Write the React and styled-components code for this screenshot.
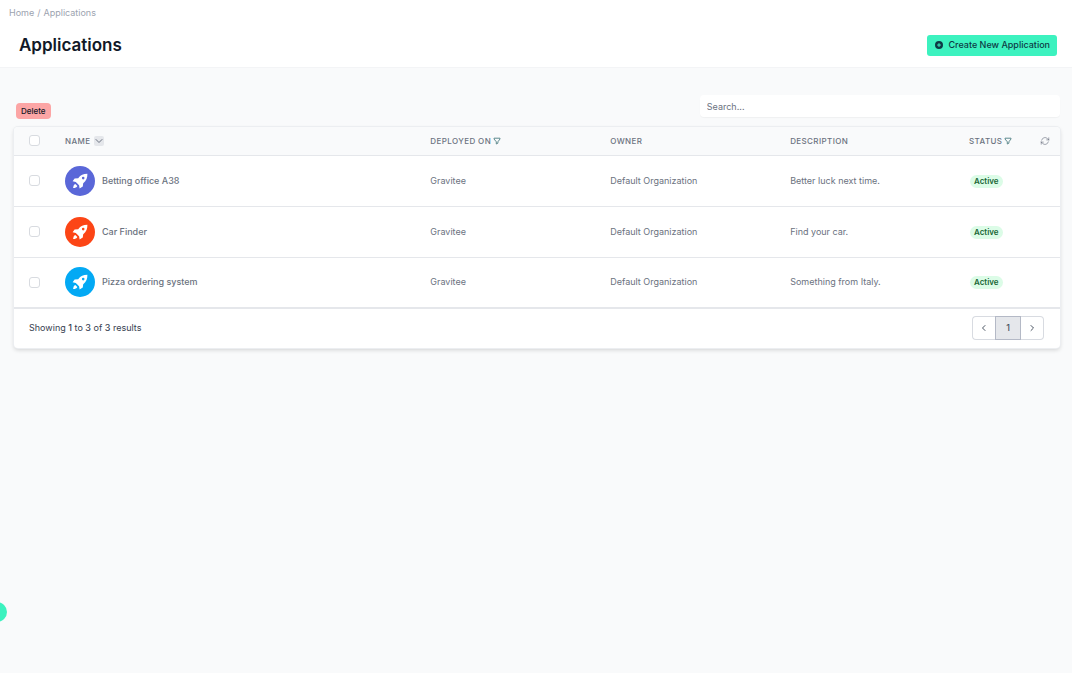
import React, { useState } from "react";
import styled, { createGlobalStyle } from "styled-components";
import { HiPlusCircle } from "react-icons/hi";
import { HiOutlineArrowPath } from "react-icons/hi2";

const GlobalStyle = createGlobalStyle`
  * {
    box-sizing: border-box;
  }
  body {
    margin: 0;
    background: #f9fafb;
    color: #111827;
    font-family: Inter, "Liberation Sans", sans-serif;
    font-size: 9px;
    line-height: 14px;
  }
  button, input {
    font-family: inherit;
    font-size: inherit;
    line-height: inherit;
  }
`;

const Page = styled.div`
  position: relative;
  min-height: 100vh;
`;

const Header = styled.header`
  background: #fff;
  border-bottom: 1px solid #f3f4f6;
  padding: 6px 15px 10px 9px;
`;

const Breadcrumb = styled.nav`
  display: flex;
  gap: 3px;
  color: #9ca3af;

  a {
    color: inherit;
    text-decoration: none;
  }
`;

const TitleRow = styled.div`
  display: flex;
  align-items: center;
  justify-content: space-between;
  margin-top: 13px;
  padding-left: 10px;
`;

const Title = styled.h1`
  margin: 0;
  font-size: 17px;
  font-weight: 600;
  line-height: 24px;
`;

const CreateButton = styled.button`
  display: flex;
  align-items: center;
  gap: 5px;
  height: 21px;
  padding: 0 7px;
  border: 0;
  border-radius: 3px;
  background: #3cf2bf;
  color: #0e3a45;
  font-weight: 500;
  cursor: pointer;
`;

const Main = styled.main`
  padding: 27px 12px 0 14px;
`;

const Tools = styled.div`
  display: flex;
  justify-content: space-between;
  align-items: flex-end;
  height: 24px;
  margin-bottom: 8px;
  padding-left: 2px;
`;

const DeleteButton = styled.button`
  height: 16px;
  padding: 0 5px;
  border: 0;
  border-radius: 4px;
  background: #fca5a5;
  color: #111827;
  font-size: 8px;
  font-weight: 500;
  cursor: pointer;
`;

const Search = styled.input`
  align-self: flex-start;
  width: 34.5%;
  height: 22px;
  padding: 0 7px;
  border: 0;
  border-radius: 4px;
  background: #fff;
  box-shadow: 0 1px 1px rgba(0, 0, 0, 0.04);
  color: #374151;

  &::placeholder {
    color: #6b7280;
    opacity: 1;
  }
`;

const Card = styled.section`
  overflow: hidden;
  background: #fff;
  border-radius: 4px;
  box-shadow: 0 0 0 1px #eceef1, 0 2px 4px rgba(0, 0, 0, 0.16);
`;

const Table = styled.table`
  width: 100%;
  table-layout: fixed;
  border-collapse: collapse;
  color: #6b7280;
`;

const Col = styled.col`
  width: ${props => props.$width};
`;

const HeadCell = styled.th`
  height: 28px;
  padding: 0;
  background: #f9fafb;
  border-bottom: 1px solid #e5e7eb;
  font-size: 8px;
  font-weight: 500;
  letter-spacing: 0.05em;
  text-align: left;
  text-transform: uppercase;
`;

const HeadLabel = styled.span`
  display: flex;
  align-items: center;
  gap: ${props => props.$gap || "1px"};
`;

const Cell = styled.td`
  height: 51px;
  padding: 0;
  border-bottom: 1px solid #e5e7eb;

  tr:last-child > & {
    height: 50px;
  }
`;

const CheckCell = styled(Cell)`
  padding-left: 15px;
`;

const CheckHead = styled(HeadCell)`
  padding-left: 15px;
`;

const Checkbox = styled.input`
  display: block;
  appearance: none;
  width: 11px;
  height: 11px;
  margin: 0;
  border: 1px solid #d8dbe0;
  border-radius: 3px;
  background: #fff;

  &:checked {
    background: #3cf2bf;
  }
`;

const IconButton = styled.button`
  display: flex;
  align-items: center;
  justify-content: center;
  width: 10px;
  height: 10px;
  padding: 0;
  border: 0;
  border-radius: 2px;
  background: ${props => props.$background || "transparent"};
  color: #6b7280;
  cursor: pointer;
`;

const AppName = styled.div`
  display: flex;
  align-items: center;
  gap: 7px;
  font-weight: 500;
`;

const Avatar = styled.span`
  display: flex;
  align-items: center;
  justify-content: center;
  width: 30px;
  height: 30px;
  border-radius: 50%;
  background: ${props => props.$color};
  color: #fff;
`;

const Badge = styled.span`
  display: inline-block;
  margin-left: 1px;
  padding: 0 4px;
  border-radius: 7px;
  background: #dcfce7;
  color: #166534;
  font-size: 8px;
  font-weight: 600;
  line-height: 13px;
`;

const Footer = styled.footer`
  display: flex;
  align-items: center;
  justify-content: space-between;
  height: 40px;
  padding: 0 16px 0 15px;
  border-top: 1px solid #e5e7eb;
  color: #374151;

  p {
    margin: 0;
  }
  b {
    font-weight: 500;
  }
`;

const Pagination = styled.nav`
  display: flex;
`;

const PageButton = styled.button`
  display: flex;
  align-items: center;
  justify-content: center;
  width: ${props => props.$active ? "26px" : "23px"};
  height: 24px;
  padding: 0;
  border: 1px solid ${props => props.$active ? "#b4b9c6" : "#d8dbe1"};
  border-width: ${props => props.$active ? "1px" : "1px 0"};
  background: ${props => props.$active ? "#e5e7eb" : "#fff"};
  color: #4b5563;
  font-weight: 500;
  cursor: pointer;

  &:first-child {
    border-left-width: 1px;
    border-radius: 4px 0 0 4px;
  }
  &:last-child {
    border-right-width: 1px;
    border-radius: 0 4px 4px 0;
  }
`;

// round handle of the collapsed side menu
const MenuHandle = styled.button`
  position: absolute;
  top: 602px;
  left: -13px;
  width: 20px;
  height: 20px;
  padding: 0;
  border: 0;
  border-radius: 50%;
  background: #3cf2bf;
  cursor: pointer;
`;

const applications = [
    { id: 1, name: "Betting office A38", color: "#5a67d8", deployedOn: "Gravitee", owner: "Default Organization", description: "Better luck next time." },
    { id: 2, name: "Car Finder", color: "#fc4516", deployedOn: "Gravitee", owner: "Default Organization", description: "Find your car." },
    { id: 3, name: "Pizza ordering system", color: "#03a9f4", deployedOn: "Gravitee", owner: "Default Organization", description: "Something from Italy." },
];

function RocketIcon() {
    return (
        <svg width="16" height="16" viewBox="0 0 16 16" fill="currentColor">
            <path
                fillRule="evenodd"
                d="M15.4.8C15.5 4.8 14.4 7.6 11.2 10.2l-.4 3.2-3.2 2-.5-3.2-3.3-3.3L.6 8.3l2-2.9 3.6-.2C8.600 2 11.400.8 15.4.8zM11.200 3.800a1.300 1.300 0 1 0 0 2.600 1.300 1.300 0 0 0 0-2.600z"
            />
            <path d="M3.300 10.900c-1.500.6-2 2-2.200 4.200 2.200-.2 3.700-.7 4.200-2.200z" />
        </svg>
    )
}

function FilterIcon() {
    return (
        <svg width="8" height="8" viewBox="0 0 8 8" fill="none" stroke="#5f8a8e" strokeLinejoin="round">
            <path d="M1 1.2h6v.8L4.900 4.800v1.400L3.300 7V4.800L1 2z" />
        </svg>
    )
}

function Chevron({ d }) {
    return (
        <svg width="8" height="8" viewBox="0 0 8 8" fill="none" stroke="currentColor" strokeLinecap="round" strokeLinejoin="round">
            <path d={d} />
        </svg>
    )
}

function ApplicationRow({ app, checked, onToggle }) {
    return (
        <tr>
            <CheckCell>
                <Checkbox type="checkbox" aria-label={app.name} checked={checked} onChange={onToggle} />
            </CheckCell>
            <Cell>
                <AppName>
                    <Avatar $color={app.color}><RocketIcon /></Avatar>
                    {app.name}
                </AppName>
            </Cell>
            <Cell>{app.deployedOn}</Cell>
            <Cell>{app.owner}</Cell>
            <Cell>{app.description}</Cell>
            <Cell><Badge>Active</Badge></Cell>
            <Cell />
        </tr>
    )
}

export default function App() {
    const [selected, setSelected] = useState([]);
    const [search, setSearch] = useState("");

    const allSelected = selected.length === applications.length;

    const toggle = (id) => {
        setSelected(selected.includes(id) ? selected.filter(item => item !== id) : [...selected, id]);
    };

    return (
        <Page>
            <GlobalStyle />
            <Header>
                <Breadcrumb aria-label="Breadcrumb">
                    <a href="#home">Home</a>
                    <span>/</span>
                    <a href="#applications">Applications</a>
                </Breadcrumb>
                <TitleRow>
                    <Title>Applications</Title>
                    <CreateButton type="button">
                        <HiPlusCircle size={10} />
                        Create New Application
                    </CreateButton>
                </TitleRow>
            </Header>

            <Main>
                <Tools>
                    <DeleteButton type="button">Delete</DeleteButton>
                    <Search
                        type="text"
                        aria-label="Search"
                        placeholder="Search..."
                        value={search}
                        onChange={(e) => setSearch(e.target.value)}
                    />
                </Tools>

                <Card>
                    <Table>
                        <colgroup>
                            <Col $width="51px" />
                            <Col />
                            <Col $width="17.2%" />
                            <Col $width="17.2%" />
                            <Col $width="17.1%" />
                            <Col $width="71px" />
                            <Col $width="20px" />
                        </colgroup>
                        <thead>
                            <tr>
                                <CheckHead>
                                    <Checkbox
                                        type="checkbox"
                                        aria-label="Select all"
                                        checked={allSelected}
                                        onChange={() => setSelected(allSelected ? [] : applications.map(app => app.id))}
                                    />
                                </CheckHead>
                                <HeadCell>
                                    <HeadLabel $gap="4px">
                                        Name
                                        <IconButton type="button" aria-label="Sort by name" $background="#e5e7eb">
                                            <Chevron d="M1 2.5l3 3 3-3" />
                                        </IconButton>
                                    </HeadLabel>
                                </HeadCell>
                                <HeadCell>
                                    <HeadLabel>
                                        Deployed on
                                        <IconButton type="button" aria-label="Filter by deployment"><FilterIcon /></IconButton>
                                    </HeadLabel>
                                </HeadCell>
                                <HeadCell>Owner</HeadCell>
                                <HeadCell>Description</HeadCell>
                                <HeadCell>
                                    <HeadLabel>
                                        Status
                                        <IconButton type="button" aria-label="Filter by status"><FilterIcon /></IconButton>
                                    </HeadLabel>
                                </HeadCell>
                                <HeadCell>
                                    <IconButton type="button" aria-label="Refresh"><HiOutlineArrowPath size={10} /></IconButton>
                                </HeadCell>
                            </tr>
                        </thead>
                        <tbody>
                            {
                                applications.map(app => (
                                    <ApplicationRow
                                        key={app.id}
                                        app={app}
                                        checked={selected.includes(app.id)}
                                        onToggle={() => toggle(app.id)}
                                    />
                                ))
                            }
                        </tbody>
                    </Table>
                    <Footer>
                        <p>Showing <b>1</b> to <b>3</b> of <b>3</b> results</p>
                        <Pagination aria-label="Pagination">
                            <PageButton type="button" aria-label="Previous"><Chevron d="M5 1.5L2.5 4 5 6.5" /></PageButton>
                            <PageButton type="button" $active>1</PageButton>
                            <PageButton type="button" aria-label="Next"><Chevron d="M3 1.5L5.5 4 3 6.5" /></PageButton>
                        </Pagination>
                    </Footer>
                </Card>
            </Main>

            <MenuHandle type="button" aria-label="Open menu" />
        </Page>
    )
}
